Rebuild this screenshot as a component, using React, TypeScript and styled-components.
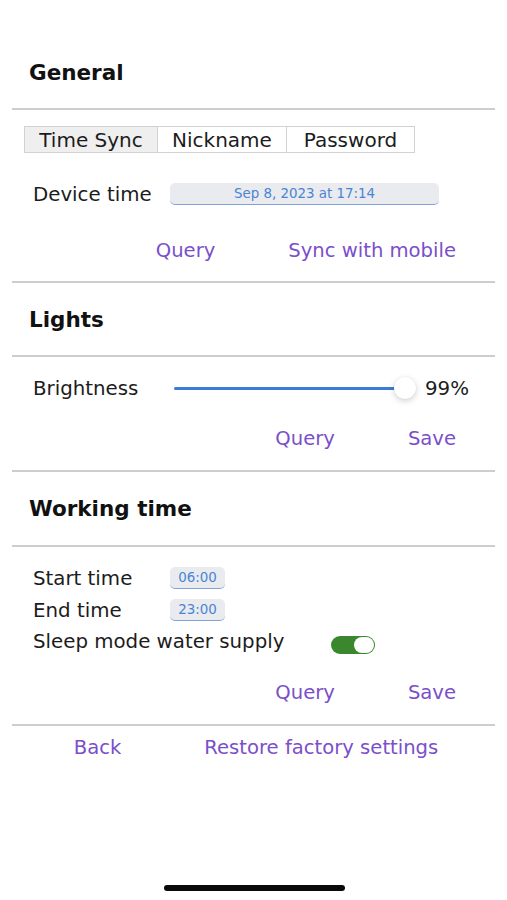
import * as React from "react";
import styled, { createGlobalStyle } from "styled-components";

const GlobalStyle = createGlobalStyle`
  html, body {
    margin: 0;
    padding: 0;
    background: #ffffff;
  }
  body {
    font-family: "DejaVu Sans", "Noto Sans", sans-serif;
    color: #1c1c1c;
  }
`;

const Screen = styled.div`
  width: 507px;
  height: 900px;
  position: relative;
  padding-top: 36px;
  box-sizing: border-box;
  overflow: hidden;
`;

const SectionHeader = styled.div<{ $height?: number }>`
  height: ${({ $height }) => $height ?? 72}px;
  display: flex;
  align-items: center;
  padding-left: 29px;
  font-size: 21.5px;
  font-weight: bold;
  color: #111;
`;

const Divider = styled.div`
  height: 2px;
  margin: 0 12px;
  background: #cdcdcd;
`;

const Body = styled.div<{ $top: number; $bottom: number }>`
  padding: ${({ $top }) => $top}px 0 ${({ $bottom }) => $bottom}px;
  display: flex;
  flex-direction: column;
`;

const Tabs = styled.div`
  display: flex;
  margin-left: 24px;
  height: 27px;
`;

const Tab = styled.div<{ $active?: boolean; $width: number }>`
  width: ${({ $width }) => $width}px;
  box-sizing: border-box;
  display: flex;
  align-items: center;
  justify-content: center;
  font-size: 20px;
  color: #1c1c1c;
  background: ${({ $active }) => ($active ? "#efefef" : "#ffffff")};
  border: 1.5px solid #d2d2d2;
  cursor: pointer;
  & + & {
    border-left: none;
  }
`;

const Row = styled.div<{ $gap?: number; $height?: number }>`
  display: flex;
  align-items: center;
  height: ${({ $height }) => $height ?? 24}px;
  margin-top: ${({ $gap }) => $gap ?? 0}px;
  padding-left: 33px;
`;

const Label = styled.span<{ $width?: number }>`
  font-size: 19.8px;
  color: #1c1c1c;
  width: ${({ $width }) => ($width ? `${$width}px` : "auto")};
  flex-shrink: 0;
  white-space: nowrap;
`;

const Pill = styled.div<{ $width: number }>`
  width: ${({ $width }) => $width}px;
  height: 22px;
  box-sizing: border-box;
  display: flex;
  align-items: center;
  justify-content: center;
  background: #e9ebef;
  border-bottom: 1.5px solid #7fa3d9;
  border-radius: 5px;
  font-size: 13.4px;
  color: #4a84d6;
`;

const Actions = styled.div<{ $gap?: number; $centered?: boolean; $spacing: number }>`
  display: flex;
  align-items: center;
  justify-content: ${({ $centered }) => ($centered ? "center" : "flex-end")};
  gap: ${({ $spacing }) => $spacing}px;
  height: 30px;
  margin-top: ${({ $gap }) => $gap ?? 0}px;
  padding-right: ${({ $centered }) => ($centered ? 0 : 51)}px;
  padding-left: ${({ $centered }) => ($centered ? 5 : 0)}px;
`;

const LinkButton = styled.button`
  background: none;
  border: none;
  padding: 0;
  font-family: inherit;
  font-size: 19.6px;
  color: #7b4fca;
  cursor: pointer;
`;

const SliderTrack = styled.div`
  position: relative;
  width: 242px;
  height: 24px;
  display: flex;
  align-items: center;
`;

const SliderFill = styled.div`
  height: 3px;
  border-radius: 2px;
  background: #3d7bd8;
  flex: 1;
  margin-right: 12px;
`;

const SliderThumb = styled.div`
  position: absolute;
  right: 0;
  top: 1px;
  width: 22px;
  height: 22px;
  border-radius: 50%;
  background: #ffffff;
  box-shadow: 0 2px 6px rgba(0, 0, 0, 0.18), 0 0 1px rgba(0, 0, 0, 0.12);
`;

const Percent = styled.span`
  margin-left: 9px;
  font-size: 19.8px;
  color: #1c1c1c;
`;

const Toggle = styled.div<{ $on: boolean }>`
  margin-top: 8px;
  width: 44px;
  height: 18px;
  box-sizing: border-box;
  border-radius: 9px;
  background: ${({ $on }) => ($on ? "#3a872d" : "#d8d8d8")};
  position: relative;
  flex-shrink: 0;
  cursor: pointer;
`;

const ToggleKnob = styled.div<{ $on: boolean }>`
  position: absolute;
  top: 1px;
  ${({ $on }) => ($on ? "right: 1px;" : "left: 1px;")}
  width: 20px;
  height: 16px;
  border-radius: 8px;
  background: #ffffff;
`;

const HomeIndicator = styled.div`
  position: absolute;
  left: 164px;
  top: 885px;
  width: 181px;
  height: 6px;
  border-radius: 3px;
  background: #0a0a0a;
`;

const tabs: [string, number][] = [
  ["Time Sync", 134],
  ["Nickname", 129],
  ["Password", 128],
];

const App: React.FC = () => {
  const [tab, setTab] = React.useState("Time Sync");
  const [sleepSupply, setSleepSupply] = React.useState(true);

  return (
    <Screen>
      <GlobalStyle />

      <SectionHeader>General</SectionHeader>
      <Divider />
      <Body $top={16} $bottom={16}>
        <Tabs>
          {tabs.map(([name, width]) => (
            <Tab
              key={name}
              $width={width}
              $active={tab === name}
              onClick={() => setTab(name)}
            >
              {name}
            </Tab>
          ))}
        </Tabs>
        <Row $gap={29}>
          <Label $width={137}>Device time</Label>
          <Pill $width={269}>Sep 8, 2023 at 17:14</Pill>
        </Row>
        <Actions $gap={29} $spacing={73}>
          <LinkButton>Query</LinkButton>
          <LinkButton>Sync with mobile</LinkButton>
        </Actions>
      </Body>
      <Divider />

      <SectionHeader>Lights</SectionHeader>
      <Divider />
      <Body $top={17} $bottom={17}>
        <Row $height={28}>
          <Label $width={141}>Brightness</Label>
          <SliderTrack>
            <SliderFill />
            <SliderThumb />
          </SliderTrack>
          <Percent>99%</Percent>
        </Row>
        <Actions $gap={21} $spacing={73}>
          <LinkButton>Query</LinkButton>
          <LinkButton>Save</LinkButton>
        </Actions>
      </Body>
      <Divider />

      <SectionHeader $height={73}>Working time</SectionHeader>
      <Divider />
      <Body $top={19} $bottom={17}>
        <Row>
          <Label $width={137}>Start time</Label>
          <Pill $width={55}>06:00</Pill>
        </Row>
        <Row $gap={8}>
          <Label $width={137}>End time</Label>
          <Pill $width={55}>23:00</Pill>
        </Row>
        <Row $gap={7}>
          <Label $width={298}>Sleep mode water supply</Label>
          <Toggle $on={sleepSupply} onClick={() => setSleepSupply(!sleepSupply)}>
            <ToggleKnob $on={sleepSupply} />
          </Toggle>
        </Row>
        <Actions $gap={24} $spacing={73}>
          <LinkButton>Query</LinkButton>
          <LinkButton>Save</LinkButton>
        </Actions>
      </Body>
      <Divider />

      <Actions $gap={6} $centered $spacing={83}>
        <LinkButton>Back</LinkButton>
        <LinkButton>Restore factory settings</LinkButton>
      </Actions>

      <HomeIndicator />
    </Screen>
  );
};

export default App;
